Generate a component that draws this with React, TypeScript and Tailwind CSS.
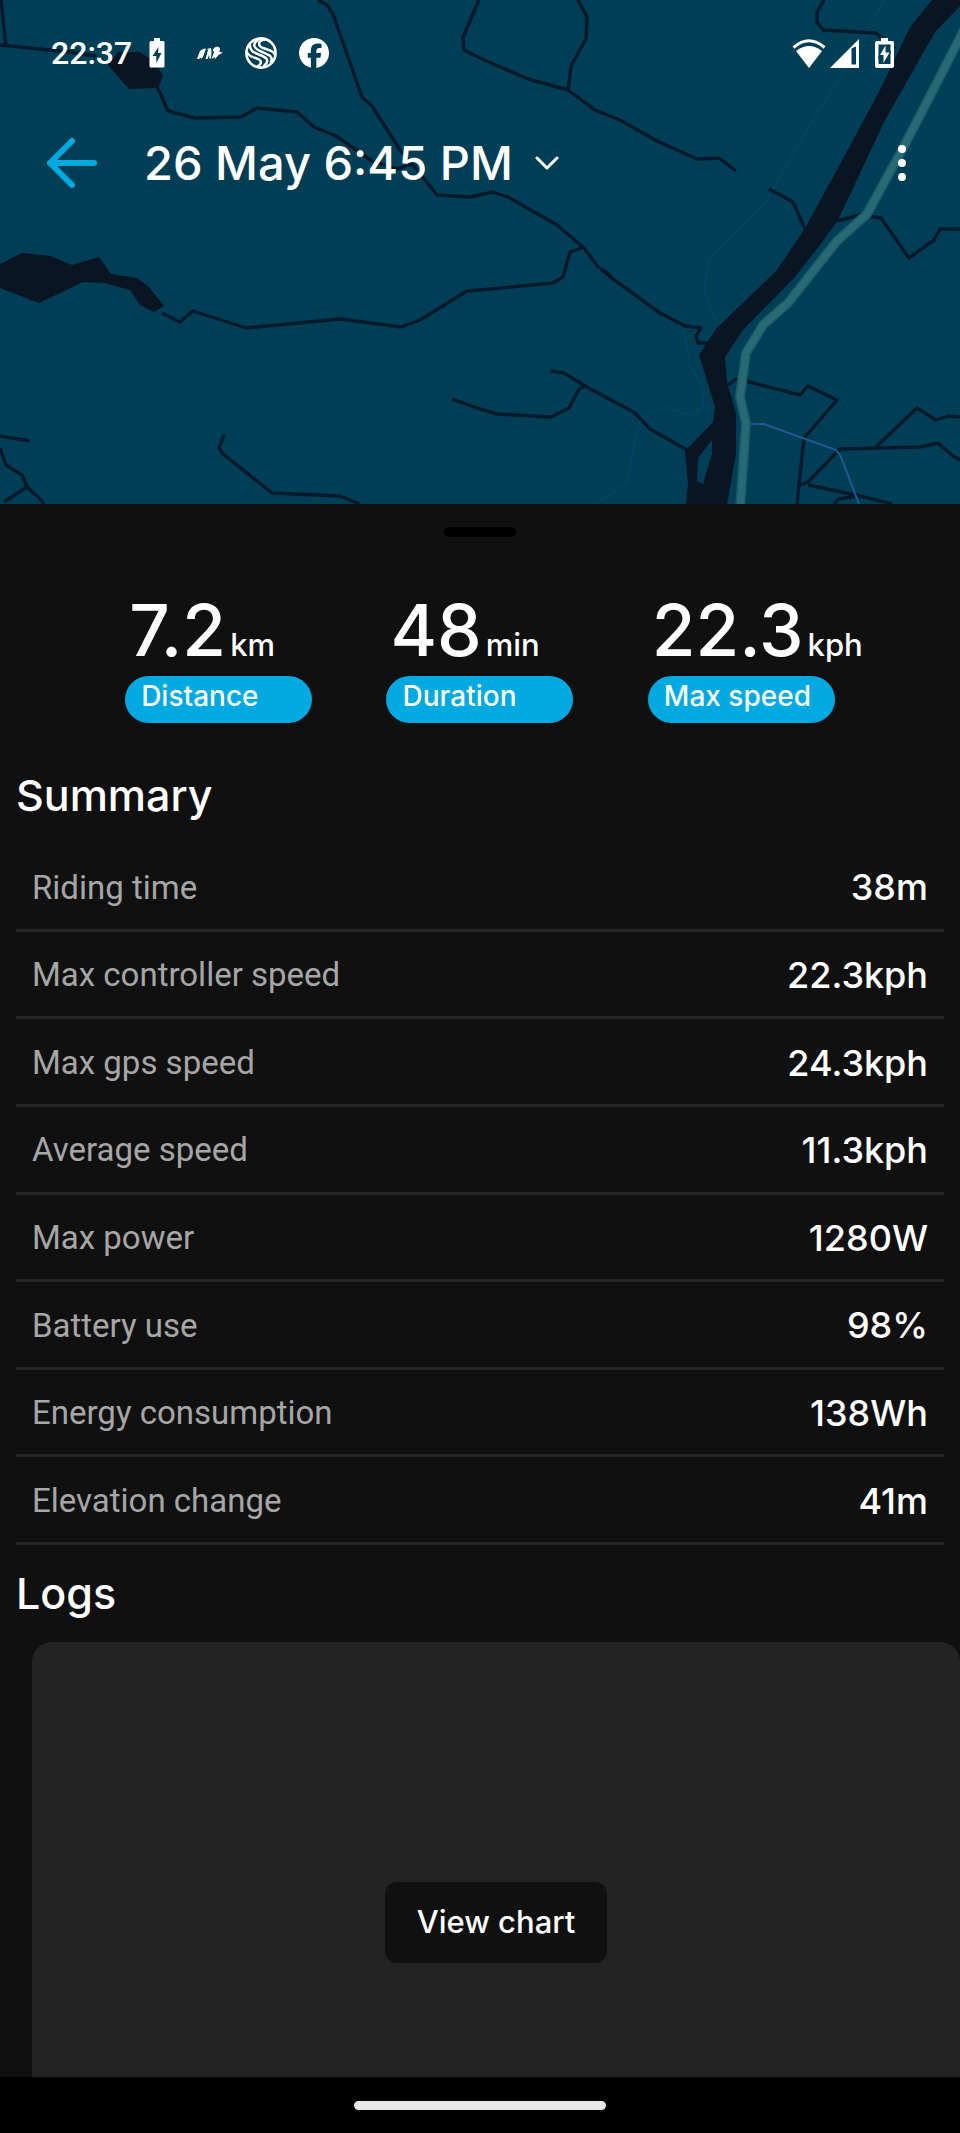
import React from "react";

const summary = [
  { label: "Riding time", value: "38m" },
  { label: "Max controller speed", value: "22.3kph" },
  { label: "Max gps speed", value: "24.3kph" },
  { label: "Average speed", value: "11.3kph" },
  { label: "Max power", value: "1280W" },
  { label: "Battery use", value: "98%" },
  { label: "Energy consumption", value: "138Wh" },
  { label: "Elevation change", value: "41m" },
];

const stats = [
  { value: "7.2", unit: "km", label: "Distance" },
  { value: "48", unit: "min", label: "Duration" },
  { value: "22.3", unit: "kph", label: "Max speed" },
];

const roads = [
  "M1 0 L6 46",
  "M0 45 L70 52 L96 56",
  "M157 86 L168 111 L195 118 L241 117 L257 108 L297 112 L314 127 L336 136 L372 161 L397 169 L412 164",
  "M318 0 L327 5 L333 14 L362 97 L372 106 L400 150 L414 166 L437 195 L470 197 L493 192 L508 197 L557 225 L584 248 L599 268",
  "M578 0 L587 17 L586 39 L571 66 L568 90",
  "M479 0 L463 37 L464 50 L480 58 L528 79 L568 90 L595 110 L620 120 L657 141 L697 159 L719 158 L736 171",
  "M824 0 L817 12 L817 22 L823 30 L876 33 L884 40 L895 48",
  "M769 189 L793 202 L805 229",
  "M837 221 L860 215 L881 218 L909 258 L934 240 L940 229 L960 229",
  "M162 313 L180 322 L193 311 L246 328 L340 319 L401 327 L420 320 L467 291 L480 290 L553 283 L563 277 L570 252 L584 247",
  "M600 268 L613 279 L660 313 L685 326 L701 328 L696 336 L698 343 L708 343",
  "M551 371 L564 373 L585 386 L635 413 L650 429 L687 450",
  "M452 399 L480 409 L497 414 L551 417 L569 408 L579 389 L586 386",
  "M224 435 L219 448 L223 454 L272 493 L340 496 L360 504",
  "M0 436 L30 441",
  "M0 448 L6 465 L22 475 L27 487 L39 498 L44 504",
  "M4 502 L27 487",
  "M728 385 L736 379 L745 381 L800 395 L808 386 L837 400 L804 438 L797 504",
  "M960 417 L948 416 L936 420 L917 408 L876 447",
  "M800 485 L808 482 L840 449 L920 447 L938 443 L953 456 L960 460",
  "M808 485 L860 496 L892 504",
  "M834 504 L839 499 L858 496",
];

const highway =
  "M968 22 L928 100 L902 150 L867 214 L837 241 L788 303 L763 325 L746 353 L740 397 L746 423 L740 510";

function MapArt() {
  return (
    <svg
      className="absolute inset-0 h-full w-full"
      viewBox="0 0 960 504"
      preserveAspectRatio="xMidYMid slice"
      fill="none"
      aria-hidden="true"
    >
      <rect width="960" height="504" fill="#003e56" />
      <g stroke="#06476a" strokeWidth="2" opacity="0.5">
        <path d="M884 0 L838 80 L795 150 L765 203 L709 259 L704 290 L716 320" />
        <path d="M684 330 L690 365 L702 385 L704 405 L692 416 L665 407 L642 416 L634 445 L628 480 L617 490 L594 504" />
      </g>
      <g stroke="#041a2b" strokeWidth="3.4" strokeLinejoin="round">
        {roads.map((d) => (
          <path key={d} d={d} />
        ))}
      </g>
      <g fill="#0a1524">
        <path d="M108 65 L118 52 L140 52 L155 62 L163 76 L158 88 L129 89 Z" />
        <path d="M0 264 L22 253 L50 256 L72 265 L99 257 L111 274 L137 278 L148 286 L164 306 L154 312 L140 305 L130 290 L104 283 L83 282 L39 303 L0 288 Z" />
        <path d="M600 269 L608 271 L619 285 L610 279 Z" />
        <path
          fillRule="evenodd"
          d="M932 0 L910 27 L880 90 L838 168 L804 230 L785 258 L776 271 L716 329 L699 355 L715 407 L713 422 L685 451 L688 483 L686 504 L727 504 L736 454 L736 413 L727 382 L725 357 L743 330 L794 278 L820 245 L838 220 L885 120 L935 32 L960 6 L960 0 Z M712 440 L712 454 L703 484 L697 481 L698 458 Z"
        />
      </g>
      <g strokeLinejoin="round">
        <path d={highway} stroke="#1a5a6b" strokeWidth="10" />
        <path d={highway} stroke="#276a74" strokeWidth="7" />
      </g>
      <path d="M751 424 L764 424 L836 450 L841 457 L859 504" stroke="#205894" strokeWidth="2" />
    </svg>
  );
}

function BatterySolid() {
  return (
    <svg className="h-[30px] w-4" viewBox="0 0 16 30" aria-hidden="true">
      <path fill="#fff" fillRule="evenodd" d="M5 0h6v3h3q1.500 0 1.500 1.500V28q0 1.500-1.500 1.500H2q-1.500 0-1.500-1.500V4.500Q.5 3 2 3h3Z M9.500 9 3.500 18h3.800v7L12.500 15H9Z" />
    </svg>
  );
}

function MotionMark() {
  return (
    <svg className="h-[14px] w-[26px]" viewBox="0 0 26 14" fill="#fff" aria-hidden="true">
      <path d="M0 13 3 5 6 3 9 2.500 6 11 4 13 3.500 11.500 2 13Z" />
      <path d="M8.500 13 11 4 10 3 14 2 14.500 6 14 12 12.500 13 12 9 10.500 13Z" />
      <path d="M14.500 13 17 6 15.500 4 17.500 1.500 20.500 .5 23 2 22.500 6 26 6.500 21.500 9 18 13 17.500 11Z" />
    </svg>
  );
}

function SwirlMark() {
  return (
    <svg className="size-8" viewBox="0 0 32 32" fill="none" stroke="#fff" strokeWidth="2.500" strokeLinecap="round" aria-hidden="true">
      <circle cx="16" cy="16" r="14.600" strokeWidth="2.600" />
      <path d="M20 2.500C12 3.500 13 9 18 11C24 13.500 28 13 29.500 17" />
      <path d="M13 3C6.500 7 9 11.500 16 14.500C24 18 28.500 19 26 25" />
      <path d="M5 8C4.500 14 9 15.500 15 18C22 21 25 23 19 29" />
      <path d="M2.500 16C5 20.500 10 20 14 22.500C17 24.500 16.500 27 13 29" />
    </svg>
  );
}

function FacebookMark() {
  return (
    <svg className="size-[30px]" viewBox="0 0 24 24" fill="#fff" aria-hidden="true">
      <path d="M24 12a12 12 0 1 0-14.500 11.700v-8H7V12h2.500v-1.600c0-4.100 1.850-6 5.900-6 .77 0 2.100.15 2.640.3V8c-.28-.03-.78-.05-1.400-.05-2 0-2.760.75-2.760 2.700V12h3.900l-.67 3.700h-3.230v8.200A12 12 0 0 0 24 12Z" />
    </svg>
  );
}

function WifiMark() {
  return (
    <svg className="h-[29px] w-[34px]" viewBox="0 0 34 29" aria-hidden="true">
      <path d="M1.500 8.500Q17-5 32.500 8.500" fill="none" stroke="#fff" strokeWidth="3" />
      <path d="M4 12Q17 2 30 12L17 29Z" fill="#fff" />
    </svg>
  );
}

function SignalMark() {
  return (
    <svg className="size-[29px]" viewBox="0 0 29 29" aria-hidden="true">
      <path fill="#fff" fillRule="evenodd" d="M29 0V29H0Z M21.500 9.500V25.500H26V7.500Z" />
    </svg>
  );
}

function BatteryOutline() {
  return (
    <svg className="h-[30px] w-[19px]" viewBox="0 0 19 30" aria-hidden="true">
      <path fill="#fff" fillRule="evenodd" d="M6 0h7v3h4q2 0 2 2v23q0 2-2 2H2q-2 0-2-2V5q0-2 2-2h4Z M3.500 6.500v10L3 20l.5 1v5h12v-9l.5-3-.5-1V6.500Z" />
      <path fill="#fff" d="M10.500 7.500 5 17h3.500v8L14.500 14.500h-4Z" />
    </svg>
  );
}

export default function App() {
  return (
    <div className="flex h-screen flex-col bg-[#101010] font-['Inter',sans-serif] font-medium text-white">
      <header className="relative h-[504px] shrink-0 overflow-hidden">
        <MapArt />
        <div className="relative flex h-[106px] items-center justify-between pr-[66px] pl-[51px]">
          <div className="flex items-center">
            <span className="w-[98px] font-['Roboto',sans-serif] text-[32px]">22:37</span>
            <BatterySolid />
            <div className="ml-8 flex items-center gap-[22px]">
              <MotionMark />
              <SwirlMark />
              <FacebookMark />
            </div>
          </div>
          <div className="flex items-center">
            <WifiMark />
            <div className="mr-4 ml-1">
              <SignalMark />
            </div>
            <BatteryOutline />
          </div>
        </div>
        <div className="relative flex h-[114px] items-center pr-[37px] pl-11">
          <button type="button" aria-label="Back" className="mr-[46px]">
            <svg className="h-[54px] w-[54px]" viewBox="0 0 54 54" fill="none" stroke="#00a9e0" strokeWidth="6" strokeLinecap="round" strokeLinejoin="round" aria-hidden="true">
              <path d="M50 27H6M28 5 6 27l22 22" />
            </svg>
          </button>
          <button type="button" className="flex items-center gap-[22px] text-[47px] font-medium">
            <span>26 May 6:45 PM</span>
            <svg className="h-[14px] w-6" viewBox="0 0 24 14" fill="none" stroke="#fff" strokeWidth="3" strokeLinecap="round" strokeLinejoin="round" aria-hidden="true">
              <path d="M2 2l10 10L22 2" />
            </svg>
          </button>
          <button type="button" aria-label="More options" className="ml-auto px-4">
            <svg className="h-9 w-[10px]" viewBox="0 0 10 36" fill="#fff" aria-hidden="true">
              <circle cx="5" cy="4" r="4" />
              <circle cx="5" cy="18" r="4" />
              <circle cx="5" cy="32" r="4" />
            </svg>
          </button>
        </div>
      </header>

      <main className="min-h-0 flex-1 overflow-y-auto [scrollbar-width:none]">
        <div className="mx-auto mt-[23px] h-[10px] w-[72px] rounded-full bg-black" />

        <section className="mt-[57px] grid grid-cols-3 px-[88px]">
          {stats.map((s) => (
            <div key={s.label} className="mx-auto w-[187px]">
              <p className="mb-[9px] flex h-[73px] items-baseline gap-1 pl-1 text-[71px] leading-[73px] whitespace-nowrap">
                {s.value}
                <span className="text-[31px] leading-none">{s.unit}</span>
              </p>
              <p className="h-[47px] rounded-full bg-[#00a9e0] px-4 text-[28px] leading-10 whitespace-nowrap">{s.label}</p>
            </div>
          ))}
        </section>

        <section className="px-4">
          <h2 className="mt-11 h-[77px] text-[43px] leading-[56px]">Summary</h2>
          <dl className="grid h-[701px] auto-rows-fr">
            {summary.map((row) => (
              <div key={row.label} className="flex items-center justify-between border-b-3 border-[#262626] px-4 pt-0.5">
                <dt className="font-['Roboto',sans-serif] text-[33px] font-normal text-[#a6a6a6]">{row.label}</dt>
                <dd className="text-4xl">{row.value}</dd>
              </div>
            ))}
          </dl>
        </section>

        <section>
          <h2 className="mt-5 h-[77px] pl-4 text-[43px] leading-[56px]">Logs</h2>
          <div className="ml-8 flex h-[560px] items-center justify-center rounded-[20px] bg-[#232323]">
            <button type="button" className="h-[81px] rounded-xl bg-[#101010] px-8 text-[31px] font-medium">
              View chart
            </button>
          </div>
        </section>
      </main>

      <footer className="flex h-14 shrink-0 items-center justify-center bg-black">
        <div className="h-[9px] w-[252px] rounded-full bg-[#e8e8e8]" />
      </footer>
    </div>
  );
}
